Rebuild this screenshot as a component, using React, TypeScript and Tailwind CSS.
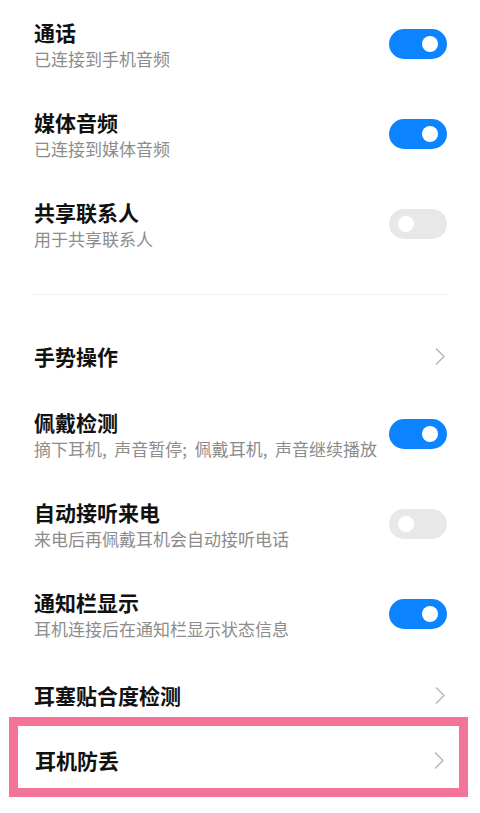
import React from 'react';

const FONT = "font-['Noto_Sans_CJK_SC','Noto_Sans',sans-serif]";

function Toggle({ on }: { on: boolean }) {
    return (
        <div
            className={
                on
                    ? 'w-[58px] h-[30px] rounded-full bg-[#0d84ff] flex items-center justify-end pr-[9px] shrink-0'
                    : 'w-[58px] h-[30px] rounded-full bg-[#e8e8e8] flex items-center justify-start pl-[9px] shrink-0'
            }
        >
            <div className="w-[16px] h-[16px] rounded-full bg-white" />
        </div>
    );
}

function Chevron() {
    return (
        <svg width="12" height="19" viewBox="0 0 12 19" className="shrink-0 mr-[1px]">
            <path d="M2 1.5 L10 9.5 L2 17.5" fill="none" stroke="#b5b5b5" strokeWidth="1.4" />
        </svg>
    );
}

function ToggleRow({ title, sub, on }: { title: string; sub: string; on: boolean }) {
    return (
        <div className="h-[90px] flex items-center justify-between pl-[34px] pr-[33px]">
            <div className="flex flex-col min-w-0">
                <span className="text-[21px] leading-[28px] font-semibold text-[#111]">{title}</span>
                <span className="text-[17px] leading-[24px] text-[#8c8c8c] mt-[1px] whitespace-pre">{sub}</span>
            </div>
            <Toggle on={on} />
        </div>
    );
}

function LinkRow({ title, className }: { title: string; className: string }) {
    return (
        <div className={`${className} flex items-center justify-between pl-[34px] pr-[33px]`}>
            <span className="text-[21px] leading-[28px] font-semibold text-[#111]">{title}</span>
            <Chevron />
        </div>
    );
}

export default function App() {
    return (
        <div className={`w-[480px] h-[813px] bg-white overflow-hidden ${FONT}`}>
            <div className="-mt-[1px]">
                <ToggleRow title="通话" sub="已连接到手机音频" on />
                <ToggleRow title="媒体音频" sub="已连接到媒体音频" on />
                <ToggleRow title="共享联系人" sub="用于共享联系人" on={false} />
            </div>

            <div className="mx-[33px] mt-[25px] h-[1px] bg-[#f0f0f0]" />

            <div className="mt-[28px]">
                <LinkRow title="手势操作" className="h-[66px]" />
            </div>
            <ToggleRow title="佩戴检测" sub="摘下耳机,  声音暂停;  佩戴耳机,  声音继续播放" on />
            <ToggleRow title="自动接听来电" sub="来电后再佩戴耳机会自动接听电话" on={false} />
            <ToggleRow title="通知栏显示" sub="耳机连接后在通知栏显示状态信息" on />
            <LinkRow title="耳塞贴合度检测" className="h-[58px] pt-[14px]" />

            {/* highlighted row */}
            <div className="ml-[9px] mr-[12px] h-[80px] border-[9px] border-[#f47398] flex items-center justify-between pl-[17px] pr-[13px]">
                <span className="text-[21px] leading-[28px] font-semibold text-[#111] mt-[6px]">耳机防丢</span>
                <div className="mt-[6px] flex">
                    <Chevron />
                </div>
            </div>
        </div>
    );
}
